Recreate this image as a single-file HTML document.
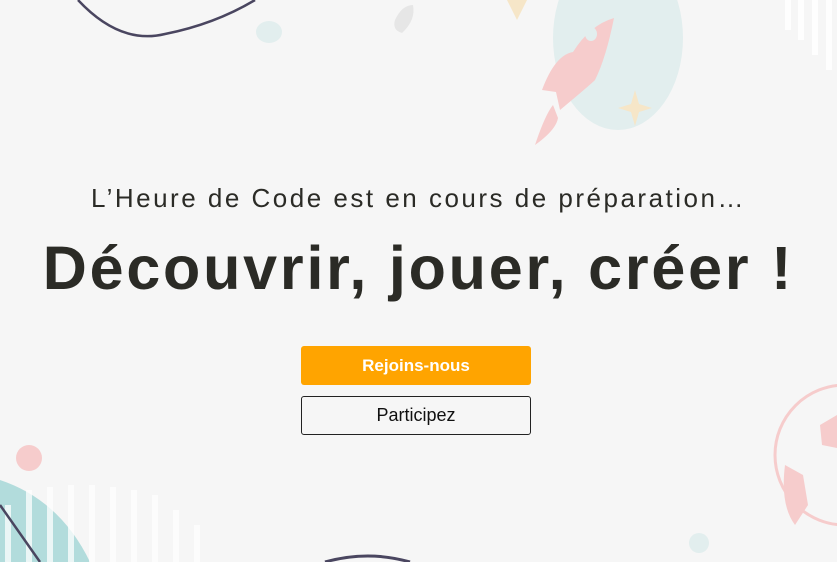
<!DOCTYPE html>
<html><head><meta charset="utf-8"><style>
html,body{margin:0;padding:0;width:837px;height:562px;overflow:hidden;background:#f6f6f6;font-family:"Liberation Sans",sans-serif}
svg.bg{position:absolute;left:0;top:0}
.sub{position:absolute;left:0;width:837px;top:183px;text-align:center;font-size:26px;color:#2b2b26;letter-spacing:2.5px;white-space:nowrap}
h1{position:absolute;left:0;width:837px;top:233px;margin:0;text-align:center;font-size:61px;font-weight:bold;color:#2b2b26;letter-spacing:2.8px;white-space:nowrap}
.btn{position:absolute;left:301px;width:230px;height:39px;box-sizing:border-box;border-radius:3px;text-align:center;line-height:39px;font-size:17px}
.b1{top:346px;background:#ffa400;color:#fff;font-weight:bold}
.b2{top:396px;border:1px solid #222;background:#f6f6f6;color:#111;line-height:37px;font-size:18px}
</style></head><body>
<svg class="bg" width="837" height="562" viewBox="0 0 837 562">
<path d="M78 0 Q120 45 165 34 Q215 24 255 0" fill="none" stroke="#4a4660" stroke-width="2.5"/>
<ellipse cx="269" cy="32" rx="13" ry="11" fill="#e2eeee"/>
<path d="M395 20 Q402 5 413 5 Q416 20 402 33 Q392 30 395 20Z" fill="#e6e6e6"/>
<path d="M507 0 L517 20 L527 0Z" fill="#f6e6c8"/>
<ellipse cx="618" cy="38" rx="65" ry="92" fill="#e2eeee"/>
<path d="M614 18 Q590 25 573 52 Q555 55 542 90 L556 92 L560 110 Q590 85 595 80 Q606 58 614 18Z" fill="#f6cccc"/>
<ellipse cx="591" cy="34" rx="6" ry="7" fill="#e2eeee"/>
<path d="M553 105 Q545 115 535 145 Q556 130 558 118Z" fill="#f6cccc"/>
<path d="M635 90 L639 104 L652 108 L639 112 L635 126 L631 112 L618 108 L631 104Z" fill="#f6e6c8"/>
<g fill="#fff" opacity="0.9"><rect x="785" y="0" width="6" height="30"/><rect x="798" y="0" width="6" height="40"/><rect x="812" y="0" width="6" height="55"/><rect x="826" y="0" width="6" height="70"/></g>
<circle cx="29" cy="458" r="13" fill="#f6cccc"/>
<path d="M0 480 Q60 500 90 562 L0 562Z" fill="#b2dcdc"/>
<g fill="#fff" opacity="0.75"><rect x="5" y="505" width="6" height="57"/><rect x="26" y="490" width="6" height="72"/><rect x="47" y="487" width="6" height="75"/><rect x="68" y="485" width="6" height="77"/><rect x="89" y="485" width="6" height="77"/><rect x="110" y="487" width="6" height="75"/><rect x="131" y="490" width="6" height="72"/><rect x="152" y="495" width="6" height="67"/><rect x="173" y="510" width="6" height="52"/><rect x="194" y="525" width="6" height="37"/></g>
<path d="M0 505 L40 562" stroke="#4a4660" stroke-width="2.5"/>
<path d="M325 562 Q368 550 410 562" fill="none" stroke="#4a4660" stroke-width="3"/>
<ellipse cx="699" cy="543" rx="10" ry="10" fill="#e2eeee"/>
<circle cx="845" cy="455" r="70" fill="none" stroke="#f6cccc" stroke-width="3"/>
<path d="M820 425 L837 415 L837 448 L822 445Z" fill="#f6cccc"/>
<path d="M785 465 L803 475 L808 505 L795 525 Q780 505 785 465Z" fill="#f6cccc"/>
</svg>
<div class="sub">L’Heure de Code est en cours de préparation…</div>
<h1>Découvrir, jouer, créer !</h1>
<div class="btn b1">Rejoins-nous</div>
<div class="btn b2">Participez</div>
</body></html>
